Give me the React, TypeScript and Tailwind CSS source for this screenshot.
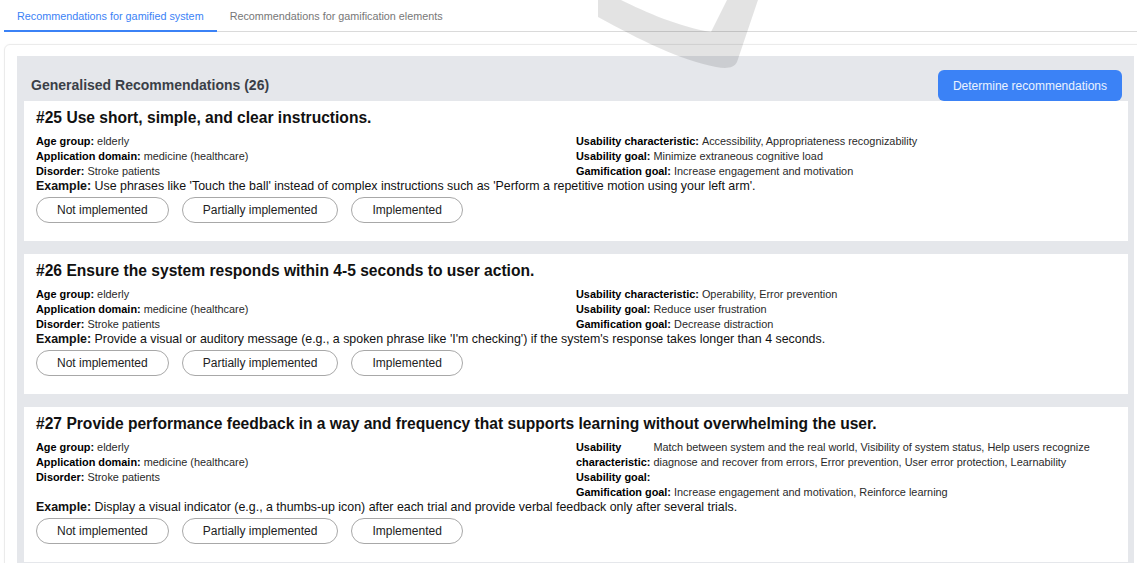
import { useState } from "react";

type Detail = { label: string; value: string };

type Recommendation = {
  id: number;
  title: string;
  left: Detail[];
  right: Detail[];
  example: string;
};

const recommendations: Recommendation[] = [
  {
    id: 25,
    title: "Use short, simple, and clear instructions.",
    left: [
      { label: "Age group:", value: "elderly" },
      { label: "Application domain:", value: "medicine (healthcare)" },
      { label: "Disorder:", value: "Stroke patients" },
    ],
    right: [
      { label: "Usability characteristic:", value: "Accessibility, Appropriateness recognizability" },
      { label: "Usability goal:", value: "Minimize extraneous cognitive load" },
      { label: "Gamification goal:", value: "Increase engagement and motivation" },
    ],
    example:
      "Use phrases like 'Touch the ball' instead of complex instructions such as 'Perform a repetitive motion using your left arm'.",
  },
  {
    id: 26,
    title: "Ensure the system responds within 4-5 seconds to user action.",
    left: [
      { label: "Age group:", value: "elderly" },
      { label: "Application domain:", value: "medicine (healthcare)" },
      { label: "Disorder:", value: "Stroke patients" },
    ],
    right: [
      { label: "Usability characteristic:", value: "Operability, Error prevention" },
      { label: "Usability goal:", value: "Reduce user frustration" },
      { label: "Gamification goal:", value: "Decrease distraction" },
    ],
    example:
      "Provide a visual or auditory message (e.g., a spoken phrase like 'I'm checking') if the system's response takes longer than 4 seconds.",
  },
  {
    id: 27,
    title:
      "Provide performance feedback in a way and frequency that supports learning without overwhelming the user.",
    left: [
      { label: "Age group:", value: "elderly" },
      { label: "Application domain:", value: "medicine (healthcare)" },
      { label: "Disorder:", value: "Stroke patients" },
    ],
    right: [
      {
        label: "Usability characteristic:",
        value:
          "Match between system and the real world, Visibility of system status, Help users recognize diagnose and recover from errors, Error prevention, User error protection, Learnability",
      },
      { label: "Usability goal:", value: "" },
      { label: "Gamification goal:", value: "Increase engagement and motivation, Reinforce learning" },
    ],
    example:
      "Display a visual indicator (e.g., a thumbs-up icon) after each trial and provide verbal feedback only after several trials.",
  },
];

const statuses = ["Not implemented", "Partially implemented", "Implemented"];

function DetailList({ items }: { items: Detail[] }) {
  return (
    <div className="flex flex-col">
      {items.map((item) => (
        <div key={item.label} className="flex gap-[3px]">
          <span className="font-bold text-black">{item.label}</span>
          {item.value && <span className="text-[#2a2a2a]">{item.value}</span>}
        </div>
      ))}
    </div>
  );
}

function RecommendationCard({ rec }: { rec: Recommendation }) {
  const [status, setStatus] = useState<string | null>(null);

  return (
    <div className="bg-white px-3 pt-[7px] pb-[18px]">
      <h3 className="text-[15.6px] font-bold leading-[19px] text-[#111]">
        #{rec.id} {rec.title}
      </h3>
      <div className="mt-[7px] grid grid-cols-2 items-start text-[10.9px] leading-[15px]">
        <DetailList items={rec.left} />
        <DetailList items={rec.right} />
      </div>
      <p className="text-[12.4px] leading-[15px] text-[#111]">
        <span className="font-bold">Example:</span> {rec.example}
      </p>
      <div className="mt-[3px] flex gap-[13px]">
        {statuses.map((s) => (
          <button
            key={s}
            onClick={() => setStatus(s)}
            className={`h-[26px] rounded-full border px-5 text-[12px] text-[#222] ${
              status === s ? "border-[#3b82f6] bg-[#eff6ff]" : "border-[#a8a8a8] bg-white"
            }`}
          >
            {s}
          </button>
        ))}
      </div>
    </div>
  );
}

export default function App() {
  const [tab, setTab] = useState(0);
  const tabs = ["Recommendations for gamified system", "Recommendations for gamification elements"];

  return (
    <div className="relative h-screen overflow-hidden bg-white pl-1 font-['Liberation_Sans',Arial,sans-serif]">
      <div className="flex border-b border-[#dadada]">
        {tabs.map((t, i) => (
          <button
            key={t}
            onClick={() => setTab(i)}
            className={`-mb-px border-b-2 px-[13px] pt-[10px] pb-[7px] text-[10.8px] leading-[13px] ${
              tab === i ? "border-[#3b82f6] text-[#3b82f6]" : "border-transparent text-[#777]"
            }`}
          >
            {t}
          </button>
        ))}
      </div>

      <div className="mt-[12px] mr-[-10px] rounded-md border border-[#ebebeb] px-[12px] pt-[11px] shadow-[0_0_2px_rgba(0,0,0,0.04)]">
        <div className="bg-[#e5e7eb] pr-[6px] pl-[7px]">
          <div className="flex items-center justify-between pt-[14px] pr-[6px] pl-[7px]">
            <h2 className="text-[14px] font-bold text-[#3a3f47]">Generalised Recommendations (26)</h2>
            <button className="h-[31px] rounded-md bg-[#3b82f6] px-[15px] text-[12px] text-white/90">
              Determine recommendations
            </button>
          </div>
          <div className="flex flex-col gap-[13px] pb-4">
            {recommendations.map((rec) => (
              <RecommendationCard key={rec.id} rec={rec} />
            ))}
          </div>
        </div>
      </div>

      {/* translucent swoosh mark lying over the top of the page */}
      <svg
        className="pointer-events-none absolute top-0 left-0"
        width="1137"
        height="80"
        viewBox="0 0 1137 80"
      >
        <path
          d="M598 0 L621 0 C645 12 680 27 711 32 L727 0 L758 0 L737 62 C734 68 727 69 716 67 C680 60 640 40 598 17 Z"
          fill="rgba(0,0,0,0.11)"
        />
      </svg>
    </div>
  );
}
